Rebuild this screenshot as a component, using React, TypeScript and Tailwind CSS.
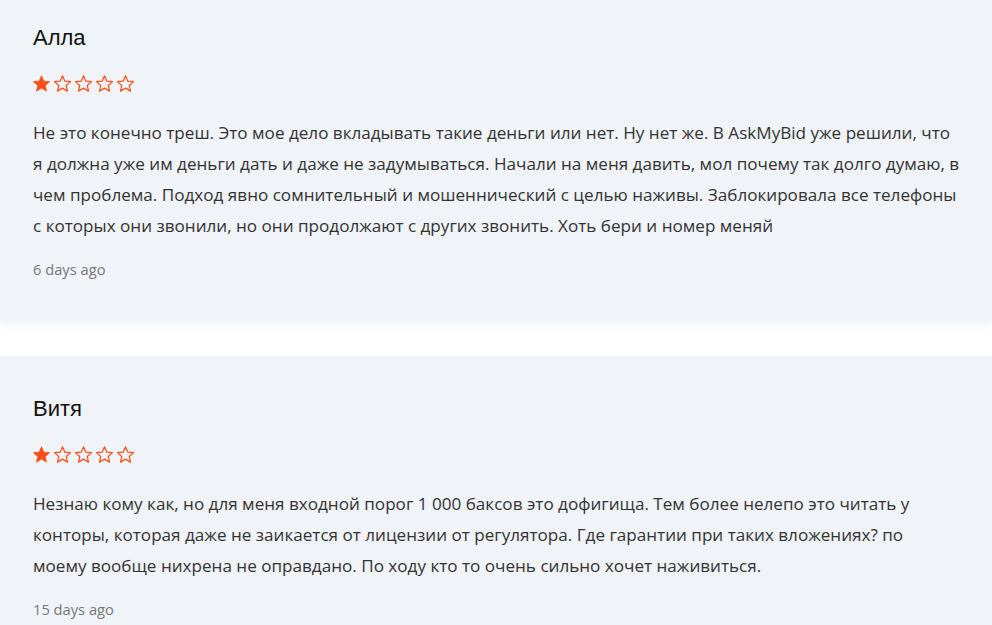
const reviews = [
  {
    name: 'Алла',
    rating: 1,
    lines: [
      'Не это конечно треш. Это мое дело вкладывать такие деньги или нет. Ну нет же. В AskMyBid уже решили, что',
      'я должна уже им деньги дать и даже не задумываться. Начали на меня давить, мол почему так долго думаю, в',
      'чем проблема. Подход явно сомнительный и мошеннический с целью наживы. Заблокировала все телефоны',
      'с которых они звонили, но они продолжают с других звонить. Хоть бери и номер меняй',
    ],
    date: '6 days ago',
  },
  {
    name: 'Витя',
    rating: 1,
    lines: [
      'Незнаю кому как, но для меня входной порог 1 000 баксов это дофигища. Тем более нелепо это читать у',
      'конторы, которая даже не заикается от лицензии от регулятора. Где гарантии при таких вложениях? по',
      'моему вообще нихрена не оправдано. По ходу кто то очень сильно хочет наживиться.',
    ],
    date: '15 days ago',
  },
];

function Star({ filled }: { filled: boolean }) {
  return (
    <svg width="17" height="17" viewBox="1.5 1.5 21 21" className="shrink-0">
      <path
        d="M12 2.5l2.9 6.6 7.1.6-5.4 4.7 1.6 7-6.2-3.7-6.2 3.7 1.6-7L2 9.7l7.1-.6z"
        fill={filled ? '#ff4d1a' : 'none'}
        stroke="#ff4d1a"
        strokeWidth={filled ? 1 : 1.5}
        strokeLinejoin="round"
      />
    </svg>
  );
}

export default function App() {
  return (
    <div className="min-h-screen overflow-hidden bg-white">
      <div className="-mt-[15px] flex flex-col gap-[34px]">
        {reviews.map((r) => (
          <div
            key={r.name}
            className="bg-[#f0f3f8] pb-[43px] pl-[33px] pr-[29px] pt-[41px] shadow-[0_4px_8px_rgba(0,0,0,0.04)]"
          >
            <div className="text-[22px] leading-6 text-[#111] [font-family:'Liberation_Sans',Arial,sans-serif]">
              {r.name}
            </div>
            <div className="mt-[25px] flex gap-[4px]">
              {[0, 1, 2, 3, 4].map((i) => (
                <Star key={i} filled={i < r.rating} />
              ))}
            </div>
            <p className="mt-[25px] text-[17.1px] leading-[31px] text-[#333] [font-family:'Open_Sans',sans-serif]">
              {r.lines.map((line) => (
                <span key={line} className="block whitespace-nowrap">
                  {line}
                </span>
              ))}
            </p>
            <div className="mt-[18px] text-[14.7px] leading-5 text-[#777] [font-family:'Open_Sans',sans-serif]">
              {r.date}
            </div>
          </div>
        ))}
      </div>
    </div>
  );
}
